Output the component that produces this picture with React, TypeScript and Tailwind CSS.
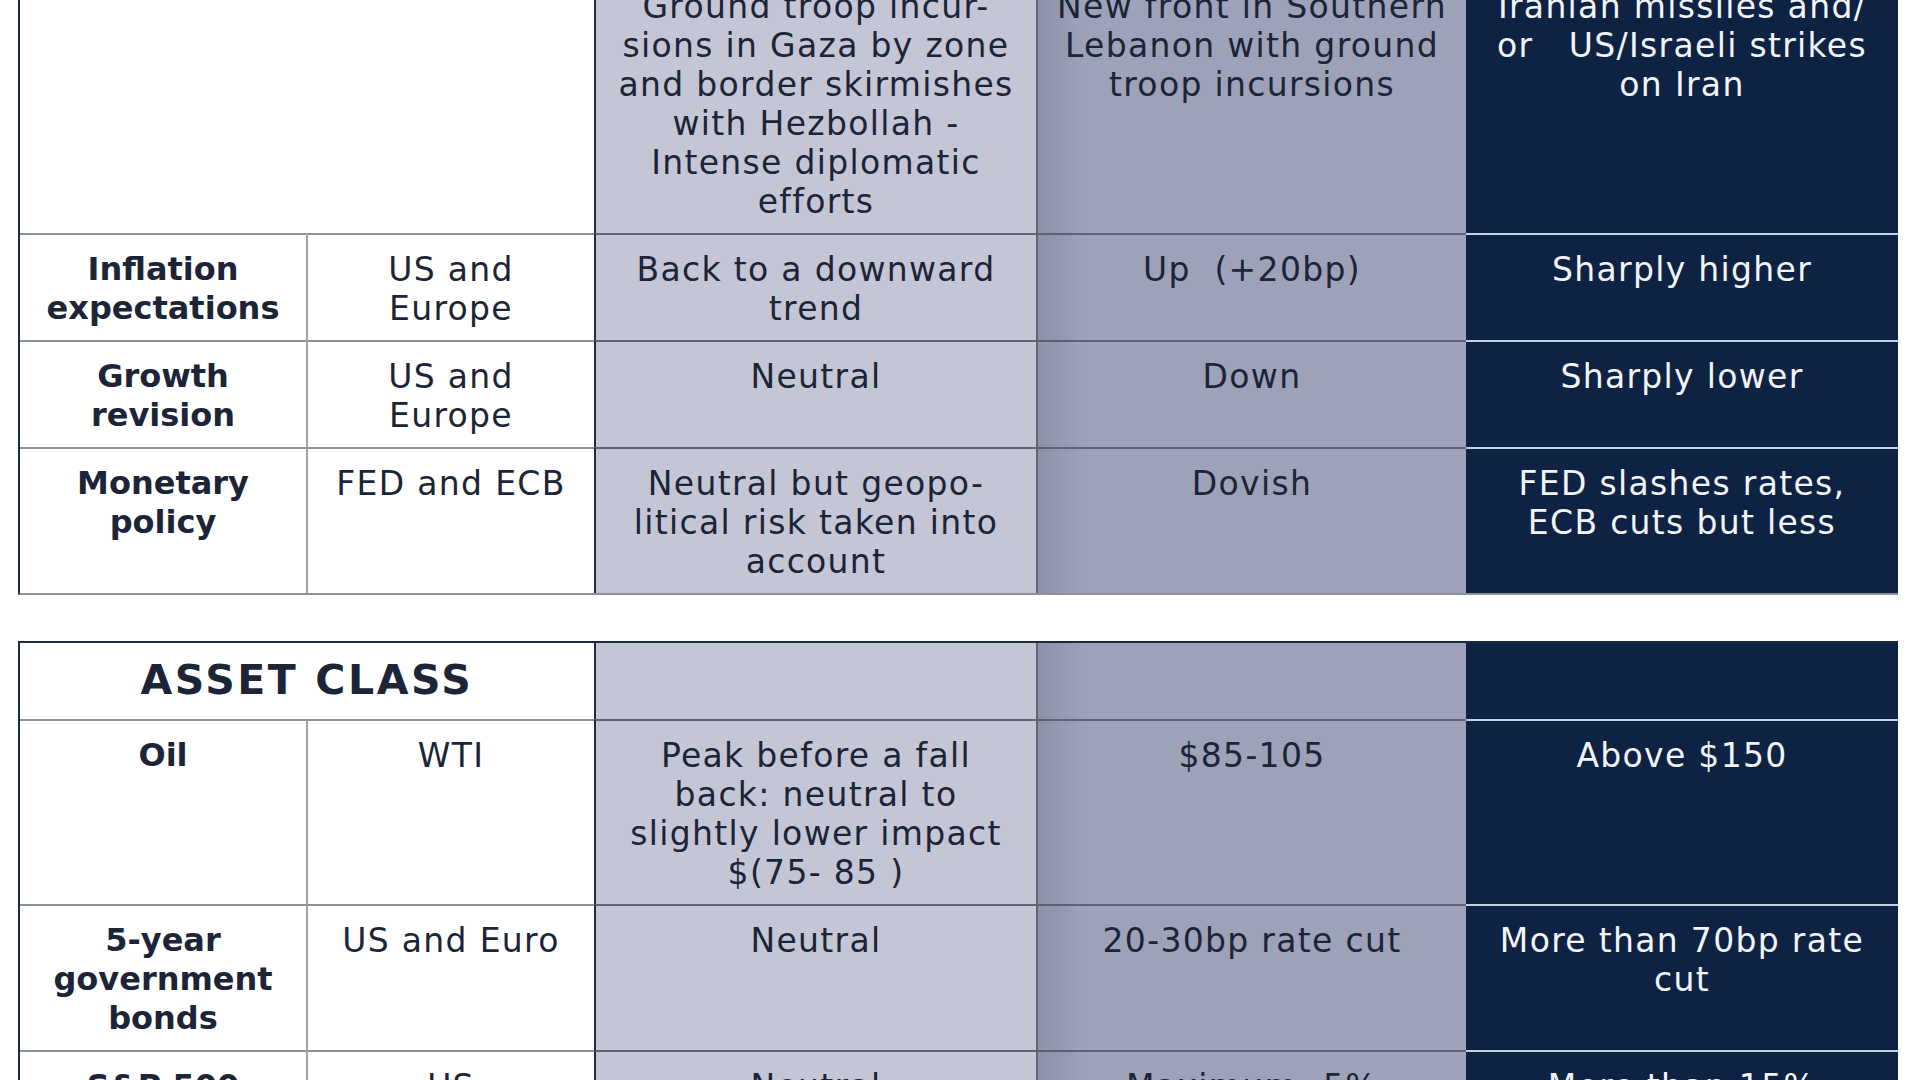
import React from "react";

type Row = {
  label: string[];
  region: string[];
  calm: string[];
  front: string[];
  war: string[];
};

const macroRows: Row[] = [
  {
    label: ["Inflation", "expectations"],
    region: ["US and", "Europe"],
    calm: ["Back to a downward", "trend"],
    front: ["Up  (+20bp)"],
    war: ["Sharply higher"],
  },
  {
    label: ["Growth", "revision"],
    region: ["US and", "Europe"],
    calm: ["Neutral"],
    front: ["Down"],
    war: ["Sharply lower"],
  },
  {
    label: ["Monetary", "policy"],
    region: ["FED and ECB"],
    calm: ["Neutral but geopo-", "litical risk taken into", "account"],
    front: ["Dovish"],
    war: ["FED slashes rates,", "ECB cuts but less"],
  },
];

const assetRows: Row[] = [
  {
    label: ["Oil"],
    region: ["WTI"],
    calm: ["Peak before a fall", "back: neutral to", "slightly lower impact", "$(75- 85 )"],
    front: ["$85-105"],
    war: ["Above $150"],
  },
  {
    label: ["5-year", "government", "bonds"],
    region: ["US and Euro"],
    calm: ["Neutral"],
    front: ["20-30bp rate cut"],
    war: ["More than 70bp rate", "cut"],
  },
  {
    label: ["S&P 500"],
    region: ["US"],
    calm: ["Neutral"],
    front: ["Maximum -5%"],
    war: ["More than 15%", "decline"],
  },
];

const Lines = ({ lines }: { lines: string[] }) => (
  <>
    {lines.map((l, i) => (
      <div key={i} className="whitespace-pre">
        {l}
      </div>
    ))}
  </>
);

const cell = "pt-[15px] pb-[12px] px-2 text-center leading-[39px] border-t-2";

const BodyRow = ({ row }: { row: Row }) => (
  <>
    <div className={`${cell} border-[#8f9094] bg-white font-bold tracking-normal text-[32px]`}>
      <Lines lines={row.label} />
    </div>
    <div className={`${cell} border-[#8f9094] bg-white border-l-2 border-l-[#a3a3a6]`}>
      <Lines lines={row.region} />
    </div>
    <div className={`${cell} border-[#5d6377] bg-[#c4c6d6] border-l-2 border-l-[#1f2a44]`}>
      <Lines lines={row.calm} />
    </div>
    <div
      className={`${cell} border-[#5d6377] border-l-2 border-l-[#5f6579] bg-[linear-gradient(to_right,#8c91a8,#9ea2b8_45px)]`}
    >
      <Lines lines={row.front} />
    </div>
    <div className={`${cell} border-[#c3d1e4] bg-[#0e2343] text-[#f2f4f8]`}>
      <Lines lines={row.war} />
    </div>
  </>
);

const grid =
  "grid grid-cols-[286px_288px_442px_430px_432px] border-l-2 border-[#1f2a44] w-[1880px]";

export default function App() {
  return (
    <div
      className="h-screen w-screen overflow-hidden bg-white text-[#1c2438] text-[33px] tracking-[0.04em]"
      style={{ fontFamily: '"DejaVu Sans", "Liberation Sans", sans-serif' }}
    >
      <div className="ml-[18px] -mt-[30px]">
        {/* scenario table */}
        <div className={`${grid} border-b-2 border-b-[#8f9094]`}>
          <div className="col-span-2 bg-white" />
          <div className="pt-[17px] pb-[12px] px-2 text-center leading-[39px] bg-[#c4c6d6] border-l-2 border-l-[#1f2a44]">
            <Lines
              lines={[
                "Ground troop incur-",
                "sions in Gaza by zone",
                "and border skirmishes",
                "with Hezbollah -",
                "Intense diplomatic",
                "efforts",
              ]}
            />
          </div>
          <div className="pt-[17px] pb-[12px] px-2 text-center leading-[39px] border-l-2 border-l-[#5f6579] bg-[linear-gradient(to_right,#8c91a8,#9ea2b8_45px)]">
            <Lines lines={["New front in Southern", "Lebanon with ground", "troop incursions"]} />
          </div>
          <div className="pt-[17px] pb-[12px] px-2 text-center leading-[39px] bg-[#0e2343] text-[#f2f4f8]">
            <Lines lines={["Iranian missiles and/", "or   US/Israeli strikes", "on Iran"]} />
          </div>
          {macroRows.map((r, i) => (
            <BodyRow key={i} row={r} />
          ))}
        </div>

        <div className="h-[46px]" />

        {/* asset class table */}
        <div className={`${grid} border-t-2 border-t-[#1f2a44]`}>
          <div className="col-span-2 h-[76px] flex items-center justify-center bg-white font-bold text-[41px] tracking-[2.6px]">
            ASSET CLASS
          </div>
          <div className="bg-[#c4c6d6] border-l-2 border-l-[#1f2a44]" />
          <div className="border-l-2 border-l-[#5f6579] bg-[linear-gradient(to_right,#8c91a8,#9ea2b8_45px)]" />
          <div className="bg-[#0e2343]" />
          {assetRows.map((r, i) => (
            <BodyRow key={i} row={r} />
          ))}
        </div>
      </div>
    </div>
  );
}
